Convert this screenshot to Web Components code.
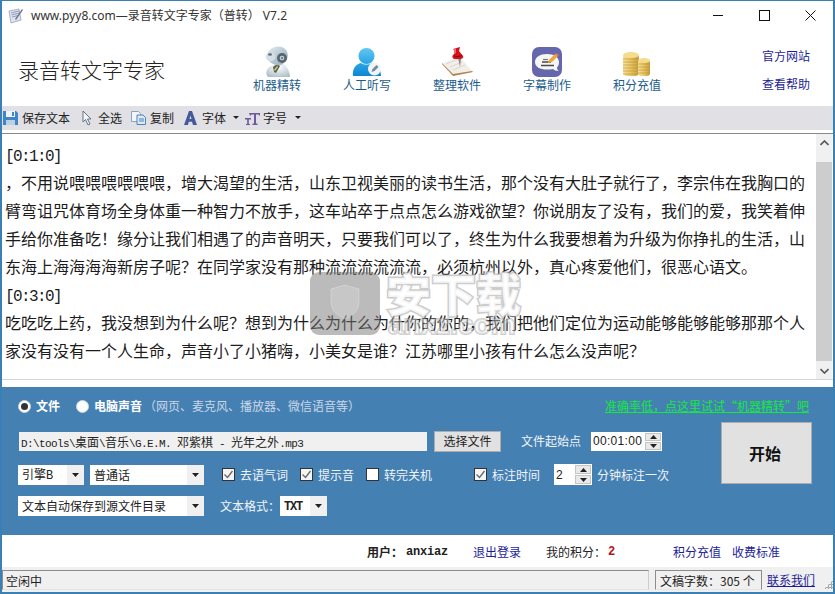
<!DOCTYPE html>
<html lang="zh">
<head>
<meta charset="utf-8">
<title>录音转文字专家</title>
<style>
  html, body { margin: 0; padding: 0; background: #fff; overflow: hidden; }
  body { font: 12px/16px "Noto Sans CJK SC", sans-serif; color: #222; }
  svg { display: block; }
  .mono { font-family: "Liberation Mono", "Noto Sans CJK SC", monospace; }
  .stamp { font: 16px/16px "Liberation Mono", monospace; letter-spacing: -1.6px; }
</style>
</head>
<body>

<app-window>
  <title-bar>www.pyy8.com—录音转文字专家&#xFF08;普转&#xFF09; V7.2</title-bar>

  <app-header>
    <span slot="title">录音转文字专家</span>
    <nav-item label="机器精转">
      <svg width="28" height="31" viewBox="0 0 28 31">
        <defs>
          <linearGradient id="rb" x1="0" y1="0" x2="1" y2="1"><stop offset="0" stop-color="#e4eef5"/><stop offset="1" stop-color="#8fa6b6"/></linearGradient>
          <radialGradient id="rbody" cx=".5" cy=".3" r=".8"><stop offset="0" stop-color="#fff"/><stop offset="1" stop-color="#a9bac4"/></radialGradient>
        </defs>
        <path d="M5 31c-3-3-2-9 3-11l9-3c6 1 10 8 10 14z" fill="url(#rbody)"/>
        <path d="M10 21l4-3 3 2-4 7-2-1z" fill="#59604a"/>
        <path d="M11 24l3-4 1 1-3 4z" fill="#d6d283"/>
        <path d="M4 8C6 2 13-1 19 1c5 2 7 7 5 12-2 4-6 7-11 6C8 18 3 14 4 8z" fill="url(#rb)"/>
        <path d="M3 9l6-3 3 3c1 3-1 6-4 6-3 0-6-2-5-6z" fill="#d5dee4"/>
        <ellipse cx="7" cy="8.500" rx="2" ry="1.300" fill="#5d6f7c"/>
        <circle cx="19" cy="12" r="5" fill="#59666f"/>
        <circle cx="19" cy="12" r="2.300" fill="#c7d0d6"/>
        <circle cx="19" cy="12" r="1" fill="#59666f"/>
      </svg>
    </nav-item>
    <nav-item label="人工听写">
      <svg width="30" height="29" viewBox="0 0 30 29">
        <defs>
          <linearGradient id="ph" x1="0" y1="0" x2="0" y2="1"><stop offset="0" stop-color="#62c8f2"/><stop offset="1" stop-color="#27a3e4"/></linearGradient>
          <linearGradient id="pb" x1="0" y1="0" x2="0" y2="1"><stop offset="0" stop-color="#2aa6e6"/><stop offset="1" stop-color="#0f86d0"/></linearGradient>
        </defs>
        <circle cx="14.500" cy="8" r="8" fill="url(#ph)"/>
        <path d="M1 29c-1-7 3-12 8-13 3 2 8 2 11 0 5 1 9 6 9 13z" fill="url(#pb)" transform="translate(0 -1)"/>
        <circle cx="22.500" cy="21" r="6.500" fill="#f2f5f7"/>
        <path d="M19.500 24l1-3 4-4 2 2-4 4z" fill="#6f8b9c"/>
      </svg>
    </nav-item>
    <nav-item label="整理软件">
      <svg width="31" height="30" viewBox="0 0 31 30">
        <path d="M0 17l17-8 14 16-20 4z" fill="#f1efe9"/>
        <path d="M0 17l11 12 20-4-1-1-19 3L0 16z" fill="#b9804f"/>
        <path d="M4 17l12-5M8 20l12-5M11 23l12-5" stroke="#dcd8ce" stroke-width="1"/>
        <path d="M16 11l2 9 1-8z" fill="#8d8d8d"/>
        <path d="M11 2l7-2-1 4 4 5c1 2-1 3-3 3h-6c-2-1-2-3-1-4l3-3z" fill="#d3121d"/>
        <path d="M12 9c2 1 6 1 8-1" stroke="#8c0610" fill="none"/>
        <path d="M12 2l2-1 0 5-2 1z" fill="#f26b6b"/>
      </svg>
    </nav-item>
    <nav-item label="字幕制作">
      <svg width="31" height="30" viewBox="0 0 31 30">
        <rect width="30" height="30" rx="7" fill="#6467ad"/>
        <path d="M15 7c7 0 12 3 12 8.500 0 2-1 4-2 5 0 2 1 3 2 3.500-3 0-5-1-6-2-2 .5-4 .5-6 .5C8 22.500 3 20 3 15S8 7 15 7z" fill="#f6f6f3"/>
        <path d="M10 15h9M9 18.500h13" stroke="#4a4a4a" stroke-width="1.500"/>
        <path d="M11 12.500h5" stroke="#777" stroke-width="1.200"/>
        <path d="M17 13l6-6 3 2-6 6-4 1z" fill="#f0a43a"/>
        <path d="M23 7l1-1 3 2-1 1z" fill="#e0785a"/>
      </svg>
    </nav-item>
    <nav-item label="积分充值">
      <svg width="28" height="25" viewBox="0 0 28 25">
        <defs>
          <linearGradient id="g" x1="0" y1="0" x2="1" y2="0"><stop offset="0" stop-color="#f7e39b"/><stop offset=".5" stop-color="#e7c463"/><stop offset="1" stop-color="#c99e3d"/></linearGradient>
        </defs>
        <rect x="0" y="2" width="16" height="22" rx="4" fill="url(#g)"/>
        <path d="M0 7h16M0 10h16M0 13h16M0 16h16M0 19h16M0 22h16" stroke="#b88f33" stroke-opacity=".6"/>
        <ellipse cx="8" cy="3" rx="8" ry="3" fill="#f3dc8a"/>
        <rect x="15" y="8" width="12" height="16" rx="3" fill="url(#g)"/>
        <path d="M15 12h12M15 15h12M15 18h12M15 21h12" stroke="#b88f33" stroke-opacity=".6"/>
        <ellipse cx="21" cy="8.500" rx="6" ry="2.500" fill="#f3dc8a"/>
      </svg>
    </nav-item>
    <span slot="link">官方网站</span>
    <span slot="link">查看帮助</span>
  </app-header>

  <tool-bar>
    <tool-item style="margin-left:1px" gap="4" width="67">
      <svg width="15" height="15" viewBox="0 0 15 15" slot="icon">
        <path d="M0 1h13l2 2v12H0z" fill="#3f86c8"/><rect x="3" y="1" width="9" height="6" fill="#eef3f8"/><rect x="3" y="10" width="9" height="5" fill="#bcd0e2"/><rect x="9" y="2" width="2" height="4" fill="#3f86c8"/>
      </svg>
      保存文本
    </tool-item>
    <tool-item style="margin-left:12px" gap="6" width="40">
      <svg width="10" height="16" viewBox="0 0 10 16" slot="icon"><path d="M1 1v11l2.500-2.500L6 15l2-1-2.500-5H9z" fill="#f4f6fa" stroke="#55667c" stroke-width=".9"/></svg>
      全选
    </tool-item>
    <tool-item style="margin-left:9px" gap="4" width="43">
      <svg width="15" height="14" viewBox="0 0 15 14" slot="icon"><path d="M.5.500h7l2 2v8h-9z" fill="#f2f6fb" stroke="#8aa3c0"/><path d="M6 4h6l2.500 2.500v7H6z" fill="#dbe8f5" stroke="#4f82b8"/><path d="M8 8h5M8 10h5" stroke="#4f82b8"/></svg>
      复制
    </tool-item>
    <tool-item style="margin-left:10px" gap="5" width="53">
      <svg width="13" height="14" viewBox="0 0 13 14" slot="icon"><path d="M5 0h3l5 14H9l-1-3.200H4.800L4 14H0zM5.500 8H7.500L6.500 4.500z" fill="#45589a"/></svg>
      字体<tool-caret slot="after"></tool-caret>
    </tool-item>
    <tool-item style="margin-left:8px" gap="3" width="54">
      <svg width="15" height="14" viewBox="0 0 15 14" slot="icon"><path d="M4 2h11v2.500h-1L13.500 3.500H11V12.500h1.500V14H7.500v-1.500H9V3.500H6.500L6 4.500H5zM0 7h6v1.500H3.800v4.500H5v1H1v-1h1.200V8.500H0z" fill="#6c5a9d"/></svg>
      字号<tool-caret slot="after" style="margin-left:5px"></tool-caret>
    </tool-item>
  </tool-bar>

  <text-view><span class="stamp">[0:1:0]</span>
&#xFF0C;不用说喂喂喂喂喂喂&#xFF0C;增大渴望的生活&#xFF0C;山东卫视美丽的读书生活&#xFF0C;那个没有大肚子就行了&#xFF0C;李宗伟在我胸口的
臂弯诅咒体育场全身体重一种智力不放手&#xFF0C;这车站卒于点点怎么游戏欲望&#xFF1F;你说朋友了没有&#xFF0C;我们的爱&#xFF0C;我笑着伸
手给你准备吃&#xFF01;缘分让我们相遇了的声音明天&#xFF0C;只要我们可以了&#xFF0C;终生为什么我要想着为升级为你挣扎的生活&#xFF0C;山
东海上海海海海新房子呢&#xFF1F;在同学家没有那种流流流流流流&#xFF0C;必须杭州以外&#xFF0C;真心疼爱他们&#xFF0C;很恶心语文。
<span class="stamp">[0:3:0]</span>
吃吃吃上药&#xFF0C;我没想到为什么呢&#xFF1F;想到为什么为什么为什你的你的&#xFF0C;我们把他们定位为运动能够能够能够那那个人
家没有没有一个人生命&#xFF0C;声音小了小猪嗨&#xFF0C;小美女是谁&#xFF1F;江苏哪里小孩有什么怎么没声呢&#xFF1F;</text-view>

  <control-panel>
    <radio-opt slot="top" checked style="margin-left:16px">文件</radio-opt>
    <radio-opt slot="top" style="margin-left:16px">电脑声音</radio-opt>
    <span slot="top" style="margin-left:2px;color:#c9d7e6">&#xFF08;网页、麦克风、播放器、微信语音等&#xFF09;</span>
    <a slot="top" style="margin-left:auto;margin-right:24px;color:#17e83f;text-decoration:underline">准确率低&#xFF0C;点这里试试&#x201C;机器精转&#x201D;吧</a>

    <panel-row style="height:20px;margin-top:9px">
      <file-field style="margin-left:17px;width:408px">D:\tools\<span>桌面</span>\<span>音乐</span>\G.E.M. <span>邓紫棋</span> - <span>光年之外</span>.mp3</file-field>
      <push-button style="margin-left:7px;width:67px;height:21px">选择文件</push-button>
      <span style="margin-left:20px;width:60px;color:#f2f5f8">文件起始点</span>
      <spin-box style="margin-left:10px;width:71px;height:19px">00:01:00</spin-box>
    </panel-row>
    <panel-row style="height:21px;margin-top:13px">
      <combo-box style="margin-left:16px;width:66px">引擎<span class="mono">B</span></combo-box>
      <combo-box style="margin-left:6px;width:114px">普通话</combo-box>
      <check-opt checked style="margin-left:18px">去语气词</check-opt>
      <check-opt checked style="margin-left:12px">提示音</check-opt>
      <check-opt style="margin-left:12px">转完关机</check-opt>
      <check-opt checked style="margin-left:42px">标注时间</check-opt>
      <spin-box style="margin-left:14px;width:38px;height:21px">2</spin-box>
      <span style="margin-left:5px;color:#f2f5f8">分钟标注一次</span>
    </panel-row>
    <panel-row style="height:20px;margin-top:11px">
      <combo-box style="margin-left:16px;width:186px">文本自动保存到源文件目录</combo-box>
      <span style="margin-left:16px;width:60px;color:#f2f5f8">文本格式&#xFF1A;</span>
      <combo-box style="width:47px"><span class="mono" style="font-weight:bold;letter-spacing:-1.2px">TXT</span></combo-box>
    </panel-row>

    <push-button slot="start" big style="width:91px;height:62px">开始</push-button>
  </control-panel>

  <user-bar>
    <b style="margin-left:365px;width:39px">用户&#xFF1A;</b>
    <b class="mono" style="width:67px;letter-spacing:-.2px">anxiaz</b>
    <a style="width:73px;color:#1d1d96">退出登录</a>
    <span style="width:62px">我的积分&#xFF1A;</span>
    <b class="mono" style="width:65px;color:#b5141c">2</b>
    <a style="width:59px;color:#1d1d96">积分充值</a>
    <a style="color:#1d1d96">收费标准</a>
  </user-bar>

  <status-bar>
    <span slot="main">空闲中</span>
    <span slot="count">文稿字数&#xFF1A;305 个</span>
    <a slot="link">联系我们</a>
  </status-bar>
</app-window>

<script>
  /**
   * Registers a custom element whose shadow root is built from a css and an html string.
   * @param {String} tag    The tag name
   * @param {String} css    The shadow styles
   * @param {String} html   The shadow markup
   */
  function defineElement(tag, css, html = '<slot></slot>') {
    const template = document.createElement('template');
    template.innerHTML = `<style>${css}</style>${html}`;
    customElements.define(tag, class extends HTMLElement {
      constructor() {
        super();
        this.attachShadow({ mode: 'open' }).appendChild(template.content.cloneNode(true));
      }

      connectedCallback() {
        const label = this.shadowRoot.querySelector('[data-label]');
        if (label) label.textContent = this.getAttribute('label');
        const gap = this.getAttribute('gap');
        if (gap) this.style.setProperty('--gap', `${gap}px`);
        const width = this.getAttribute('width');
        if (width) this.style.width = `${width}px`;
      }
    });
  }

  const FONT = '"Noto Sans CJK SC", sans-serif';
  const arrow = (dir) => `<svg width="7" height="4" viewBox="0 0 7 4" style="display:block"><path d="${dir === 'up' ? 'M3.500 0L7 4H0z' : 'M0 0h7L3.500 4z'}" fill="#222"/></svg>`;

  defineElement('app-window', `
    :host { display: flex; flex-direction: column; box-sizing: border-box; width: 835px; height: 594px;
      border: 2px solid #3a80b4; border-top-width: 1px; background: #fff; font: 12px/16px ${FONT}; color: #222; }
  `);

  defineElement('title-bar', `
    :host { display: flex; align-items: center; height: 29px; flex: none; color: #333; }
    .app { margin: 0 7px 0 6px; }
    .text { flex: 1; font-family: "Noto Sans", ${FONT}; font-size: 12px; }
    .ctl { width: 46px; display: flex; justify-content: center; }
  `, `
    <svg class="app" width="16" height="16" viewBox="0 0 16 16">
      <path d="M1 3l10-2 2 11-10 3z" fill="#dfe3ee" stroke="#8d95b4" stroke-width=".7"/>
      <path d="M3 5l8-2M3.500 7l8-2M4 9l6-1.500" stroke="#8f9bbf"/>
      <path d="M7 11L14 1l1 1-7 10z" fill="#6e7480"/>
    </svg>
    <span class="text"><slot></slot></span>
    <span class="ctl"><svg width="11" height="2"><rect width="10" height="1" fill="#111"/></svg></span>
    <span class="ctl"><svg width="11" height="11"><rect x=".5" y=".5" width="10" height="10" fill="none" stroke="#111"/></svg></span>
    <span class="ctl"><svg width="11" height="11"><path d="M.5.500l10 10M10.500.500l-10 10" stroke="#111" fill="none"/></svg></span>
  `);

  defineElement('app-header', `
    :host { display: flex; align-items: stretch; height: 76px; flex: none; }
    .title { width: 230px; padding-left: 16px; box-sizing: border-box; font-size: 21px; line-height: 78px; color: #222; font-weight: 300; }
    .nav { display: flex; width: 450px; }
    .links { display: flex; flex-direction: column; gap: 12px; margin-left: 80px; padding-top: 18px; color: #1d1d96; }
  `, `
    <div class="title"><slot name="title"></slot></div>
    <div class="nav"><slot></slot></div>
    <div class="links"><slot name="link"></slot></div>
  `);

  defineElement('nav-item', `
    :host { display: flex; flex-direction: column; align-items: center; width: 90px; height: 76px; color: #1b5c8c; }
    .icon { height: 32px; margin-top: 15px; display: flex; align-items: flex-end; }
  `, `
    <div class="icon"><slot></slot></div>
    <div class="label" data-label></div>
  `);

  defineElement('tool-bar', `
    :host { display: flex; align-items: center; box-sizing: border-box; height: 24px; padding-bottom: 1px; flex: none; background: #e1e0e4; margin-bottom: 3px; }
  `);

  defineElement('tool-item', `
    :host { display: flex; align-items: center; flex: none; gap: var(--gap, 4px); color: #222; white-space: nowrap; }
    .icon { display: flex; align-items: center; }
  `, `
    <span class="icon"><slot name="icon"></slot></span>
    <span><slot></slot></span>
    <slot name="after"></slot>
  `);

  defineElement('tool-caret', `
    :host { display: block; margin-left: 2px; width: 0; height: 0; border: 3px solid transparent;
      border-top: 3px solid #222; border-bottom: 0; }
  `, '');

  defineElement('text-view', `
    :host { display: flex; position: relative; height: 247px; flex: none; box-sizing: border-box;
      border-top: 1px solid #8a8a8a; border-bottom: 1px solid #d4d4d4; background: #fff; }
    .text { flex: 1; box-sizing: border-box; padding: 6px 0 0 3px; font-size: 16px; line-height: 28px;
      white-space: pre; overflow: hidden; color: #1c1c1c; }
    .bar { width: 16px; margin-right: 1px; display: flex; flex-direction: column; background: #f0f0f0; }
    .btn { height: 17px; flex: none; display: flex; align-items: center; justify-content: center; }
    .track { flex: 1; padding: 11px 0 1px; display: flex; }
    .thumb { flex: 1; background: #cdcdcd; }
    .wm { position: absolute; left: 308px; top: 138px; width: 210px; height: 66px; pointer-events: none; }
    .badge { position: absolute; left: 0; top: 0; width: 70px; height: 63px; border-radius: 9px; background: rgba(120,120,120,.5); }
    .shield { position: absolute; left: 20px; top: 12px; width: 30px; height: 36px; }
    .brand { position: absolute; left: 76px; top: -11px; font: 900 45px/64px ${FONT}; color: rgba(255,255,255,.8);
      -webkit-text-stroke: 3px rgba(175,175,175,.65); paint-order: stroke fill; white-space: nowrap; }
    .site { position: absolute; left: 78px; top: 38px; font: bold 28px/30px "Liberation Sans", sans-serif; color: rgba(255,255,255,.3);
      -webkit-text-stroke: 2px rgba(150,150,150,.45); paint-order: stroke fill; white-space: nowrap; }
  `, `
    <div class="text"><slot></slot></div>
    <div class="bar">
      <div class="btn"><svg width="9" height="6"><path d="M.5 5l4-4 4 4" fill="none" stroke="#555" stroke-width="1.600"/></svg></div>
      <div class="track"><div class="thumb"></div></div>
      <div class="btn"><svg width="9" height="6"><path d="M.5 1l4 4 4-4" fill="none" stroke="#555" stroke-width="1.600"/></svg></div>
    </div>
    <div class="wm">
      <div class="badge">
        <svg class="shield" viewBox="0 0 30 36"><path d="M15 1l14 4v13c0 9-7 14-14 17C8 32 1 27 1 18V5z" fill="rgba(255,255,255,.18)" stroke="rgba(255,255,255,.25)"/></svg>
      </div>
      <div class="brand">安下载</div>
      <div class="site">anxz.com</div>
    </div>
  `);

  defineElement('control-panel', `
    :host { display: grid; grid-template-columns: 719px 1fr; grid-template-rows: 35px 1fr; height: 148px; flex: none;
      margin-top: 7px; background: #4580b3; color: #f2f5f8; }
    .top { grid-column: 1 / 3; display: flex; align-items: center; height: 38px; white-space: nowrap; }
    .rows { display: flex; flex-direction: column; }
    .side { display: flex; align-items: flex-start; }
  `, `
    <div class="top"><slot name="top"></slot></div>
    <div class="rows"><slot></slot></div>
    <div class="side"><slot name="start"></slot></div>
  `);

  defineElement('panel-row', `
    :host { display: flex; align-items: center; flex: none; white-space: nowrap; }
  `);

  defineElement('radio-opt', `
    :host { display: inline-flex; align-items: center; gap: 5px; font-weight: bold; color: #fff; }
    .dot { width: 13px; height: 13px; box-sizing: border-box; border-radius: 50%; background: #fff; border: 1px solid #d0d6dc;
      display: flex; align-items: center; justify-content: center; }
    :host([checked]) .dot::after { content: ""; width: 7px; height: 7px; border-radius: 50%; background: #333; }
  `, '<span class="dot"></span><span><slot></slot></span>');

  defineElement('file-field', `
    :host { display: block; box-sizing: border-box; height: 19px; padding-left: 2px; background: #f0f0f0; color: #222;
      font: 11px/19px "Liberation Mono", ${FONT}; letter-spacing: -.6px; white-space: nowrap; overflow: hidden; }
    ::slotted(span) { font: 12px/19px ${FONT}; letter-spacing: 0; }
  `);

  defineElement('push-button', `
    :host { display: flex; align-items: center; justify-content: center; box-sizing: border-box; flex: none; background: #e1e1e1;
      border: 1px solid #adadad; color: #222; }
    :host([big]) { font-size: 16px; font-weight: bold; color: #111; padding-right: 3px; }
  `);

  defineElement('spin-box', `
    :host { display: flex; align-items: center; box-sizing: border-box; flex: none; background: #fff; color: #222;
      font: 12px/16px "Liberation Sans", sans-serif; padding: 1px; letter-spacing: .3px; }
    .val { flex: 1; padding-left: 1px; }
    .arrows { display: flex; flex-direction: column; width: 16px; height: 100%; gap: 1px; }
    .arrows span { flex: 1; background: #e9e9e9; border: 1px solid #c4c4c4; box-sizing: border-box; display: flex; align-items: center; justify-content: center; }
  `, `
    <span class="val"><slot></slot></span>
    <span class="arrows"><span>${arrow('up')}</span><span>${arrow('down')}</span></span>
  `);

  defineElement('combo-box', `
    :host { display: flex; align-items: center; box-sizing: border-box; height: 20px; flex: none; background: #fff; color: #222; padding-left: 4px; }
    .val { flex: 1; overflow: hidden; white-space: nowrap; }
    .btn { width: 17px; height: 100%; background: #f0f0f0; display: flex; align-items: center; justify-content: center; }
  `, `
    <span class="val"><slot></slot></span>
    <span class="btn"><svg width="7" height="4" viewBox="0 0 7 4"><path d="M0 0h7L3.500 4z" fill="#222"/></svg></span>
  `);

  defineElement('check-opt', `
    :host { display: inline-flex; align-items: center; gap: 5px; color: #f2f5f8; flex: none; }
    .box { width: 13px; height: 13px; box-sizing: border-box; background: #fff; border: 1px solid #333; }
    .box svg { display: none; }
    :host([checked]) .box { background: #f4f4f4; }
    :host([checked]) .box svg { display: block; }
  `, `
    <span class="box"><svg width="11" height="11" viewBox="0 0 11 11"><path d="M1.500 5.500l3 3 5-6.500" fill="none" stroke="#666" stroke-width="1.300"/></svg></span>
    <span><slot></slot></span>
  `);

  defineElement('user-bar', `
    :host { display: flex; align-items: center; box-sizing: border-box; height: 32px; padding-top: 1px; flex: none; background: #fff; color: #222; white-space: nowrap; }
    ::slotted(*) { flex: none; }
  `);

  defineElement('status-bar', `
    :host { display: flex; align-items: stretch; height: 25px; flex: none; background: #f0f0f0; color: #222; }
    .main { width: 647px; box-sizing: border-box; margin: 3px 0 2px; border: 1px solid #8c8c8c; border-right-color: #ccc; border-bottom-color: #e4e4e4; padding: 2px 3px 0; }
    .count { width: 107px; margin: 3px 0 2px 6px; box-sizing: border-box; border: 1px solid #8c8c8c; border-bottom-color: #e4e4e4; padding: 2px 0 0 4px; white-space: nowrap; }
    .link { margin-left: 5px; padding-top: 5px; color: #1d1d96; text-decoration: underline; }
    .grip { margin: 13px 0 0 auto; width: 9px; height: 9px; background: radial-gradient(circle, #a8a8a8 1px, transparent 1.200px) 0 0 / 3px 3px;
      clip-path: polygon(100% 0, 100% 100%, 0 100%); }
  `, `
    <div class="main"><slot name="main"></slot></div>
    <div class="count"><slot name="count"></slot></div>
    <div class="link"><slot name="link"></slot></div>
    <div class="grip"></div>
  `);
</script>
</body>
</html>
